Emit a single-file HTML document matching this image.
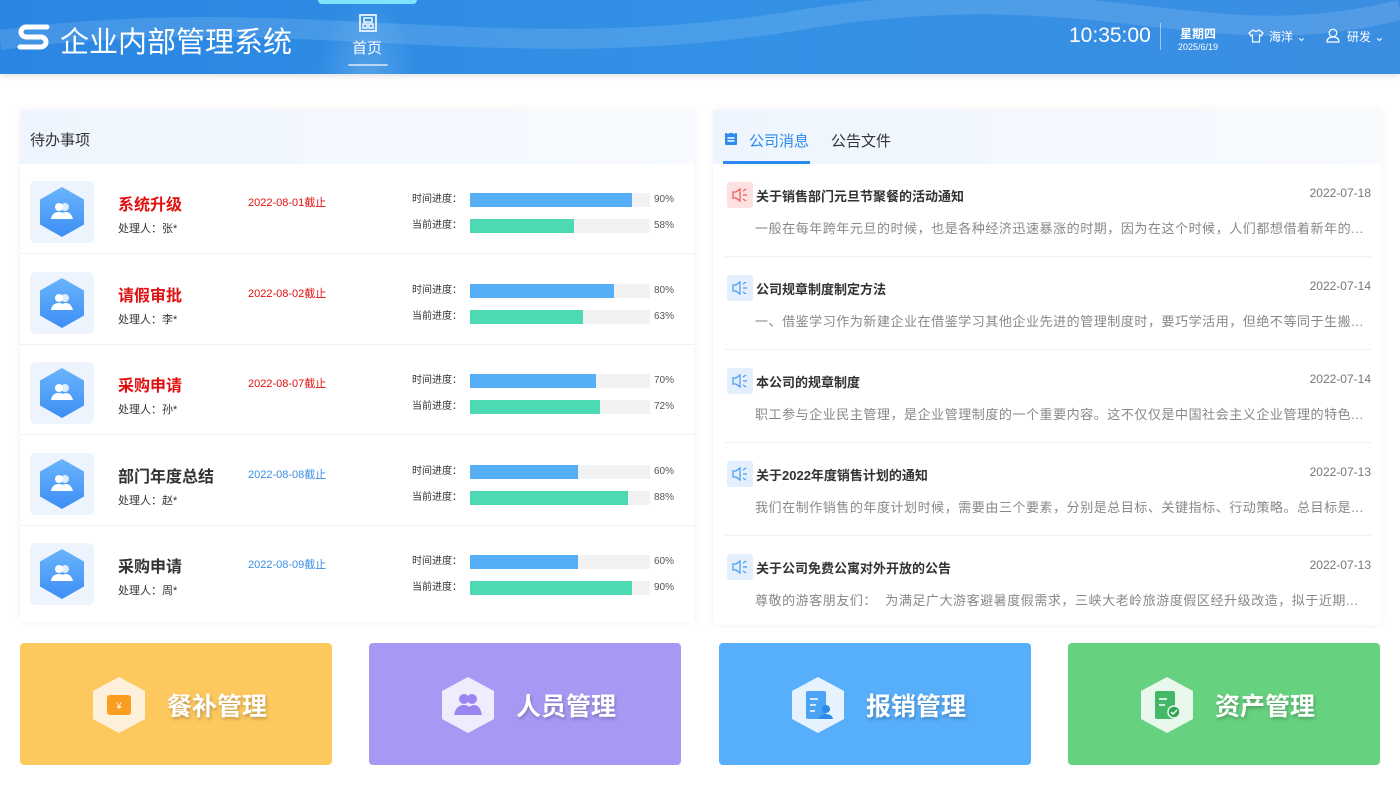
<!DOCTYPE html>
<html><head><meta charset="utf-8"><style>
*{margin:0;padding:0;box-sizing:border-box}
body{width:1400px;height:800px;background:#fff;font-family:"Liberation Sans","Noto Sans CJK SC",sans-serif;position:relative;overflow:hidden;color:#333}
.hdr{position:absolute;left:0;top:0;width:1400px;height:74px;background:linear-gradient(90deg,#2a86e2,#3291e6 50%,#3b8ee2);box-shadow:0 2px 6px rgba(0,0,0,.12)}
.abs{position:absolute}
.panel{position:absolute;background:#fff;box-shadow:0 0 8px rgba(0,0,0,.06)}
.ph{height:54px;background:linear-gradient(90deg,#eef5fe,#f7fbff)}
.row{position:absolute;left:0;width:674px;height:90px;border-bottom:1px solid #eef0f3}
.ibox{position:absolute;left:10px;top:17px;width:64px;height:62px;background:#eef4fe;border-radius:6px}
.t{position:absolute;left:98px;top:27px;font-size:16px;font-weight:bold}
.who{position:absolute;left:98px;top:56px;font-size:11px;color:#333}
.dl{position:absolute;left:228px;top:30px;font-size:11px}
.lb{position:absolute;left:392px;font-size:10px;color:#333;line-height:14px}
.bar{position:absolute;left:450px;width:180px;height:14px;background:#f2f2f2}
.bar i{display:block;height:14px}
.pc{position:absolute;left:634px;font-size:10px;color:#555;line-height:14px}
.msg{position:absolute;left:12px;width:646px;height:93px;border-bottom:1px solid #eef0f3}
.spk{position:absolute;left:2px;top:18px;width:26px;height:26px;border-radius:3px;background:#e3effd}
.spk svg{position:absolute;left:4px;top:5px}
.mt{position:absolute;left:31px;top:22px;font-size:13px;font-weight:bold;color:#333}
.md{position:absolute;right:0;top:22px;font-size:12px;color:#777}
.mx{position:absolute;left:30px;top:54px;font-size:13px;color:#888;white-space:nowrap;width:620px;overflow:hidden;letter-spacing:.55px}
.card{position:absolute;top:643px;width:312px;height:122px;border-radius:4px}
.card .ct{position:absolute;left:147px;top:44px;font-size:25px;font-weight:bold;color:#fff;text-shadow:1px 2px 3px rgba(0,0,0,.25)}
.card svg{position:absolute;left:71px;top:32px}
</style></head><body>
<div class="hdr">
 <svg class="abs" style="left:0;top:0" width="1400" height="74"><path d="M0 40 C300 0 500 70 800 20 S1200 60 1400 10" stroke="rgba(255,255,255,.12)" stroke-width="20" fill="none"/></svg>
 <svg class="abs" style="left:17px;top:23px" width="34" height="28" viewBox="0 0 34 28"><path d="M30 4H9a5 5 0 0 0 0 10h15a5 5 0 0 1 0 10H3" stroke="#fff" stroke-width="5" fill="none" stroke-linecap="round"/></svg>
 <div class="abs" style="left:60px;top:19px;font-size:29px;color:#fff">企业内部管理系统</div>
 <div class="abs" style="left:318px;top:0;width:99px;height:4px;background:#7fe3ff;border-radius:0 0 4px 4px"></div>
 <div class="abs" style="left:318px;top:0;width:99px;height:74px;background:radial-gradient(ellipse at 50% 100%,rgba(255,255,255,.18),transparent 70%)"></div>
 <svg class="abs" style="left:359px;top:14px" width="18" height="18" viewBox="0 0 18 18"><rect x="1" y="1" width="16" height="16" fill="none" stroke="#fff" stroke-width="1.6"/><rect x="5" y="4" width="8" height="4" fill="none" stroke="#fff" stroke-width="1.4"/><rect x="4" y="10" width="4" height="4" fill="none" stroke="#fff" stroke-width="1.4"/><rect x="10" y="10" width="4" height="4" fill="none" stroke="#fff" stroke-width="1.4"/></svg>
 <div class="abs" style="left:352px;top:37px;font-size:15px;color:#fff">首页</div>
 <div class="abs" style="left:348px;top:64px;width:40px;height:2px;background:rgba(255,255,255,.6);border-radius:2px"></div>
 <div class="abs" style="left:1069px;top:24px;font-size:21px;color:#fff">10:35:00</div>
 <div class="abs" style="left:1160px;top:23px;width:1px;height:27px;background:rgba(255,255,255,.5)"></div>
 <div class="abs" style="left:1176px;top:25px;font-size:12px;color:#fff;font-weight:bold;width:44px;text-align:center">星期四<div style="font-size:9px;font-weight:normal">2025/6/19</div></div>
 <svg class="abs" style="left:1248px;top:29px" width="16" height="14" viewBox="0 0 16 14"><path d="M5 1 1 4l2 3 1.5-1V13h7V6L13 7l2-3-4-3q-3 2.5-6 0z" fill="none" stroke="#fff" stroke-width="1.2"/></svg>
 <div class="abs" style="left:1269px;top:28px;font-size:12px;color:#fff">海洋 ⌄</div>
 <svg class="abs" style="left:1326px;top:28px" width="14" height="15" viewBox="0 0 14 15"><circle cx="7" cy="5" r="3.8" fill="none" stroke="#fff" stroke-width="1.2"/><path d="M1 14q0-5 6-5t6 5z" fill="none" stroke="#fff" stroke-width="1.2"/></svg>
 <div class="abs" style="left:1347px;top:28px;font-size:12px;color:#fff">研发 ⌄</div>
</div>

<div class="panel" style="left:20px;top:110px;width:674px;height:512px">
 <div class="ph"><div style="padding:19px 0 0 10px;font-size:15px;color:#333">待办事项</div></div>
 <div id="rows"></div>
</div>

<div class="panel" style="left:713px;top:110px;width:668px;height:515px">
 <div class="ph" style="position:relative">
  <svg class="abs" style="left:11px;top:21px" width="14" height="15" viewBox="0 0 14 15"><rect x="1" y="2" width="12" height="12" rx="1" fill="#2a8af0"/><path d="M4 0v3M10 0v3M3.5 7h7M3.5 10h7" stroke="#fff" stroke-width="1.4"/></svg>
  <div class="abs" style="left:36px;top:20px;font-size:15px;color:#2a8af0">公司消息</div>
  <div class="abs" style="left:10px;top:51px;width:87px;height:3px;background:#2a8af0"></div>
  <div class="abs" style="left:118px;top:20px;font-size:15px;color:#333">公告文件</div>
 </div>
 <div id="msgs"></div>
</div>

<div class="card" style="left:20px;background:#fdc85e"><svg width="56" height="60" viewBox="0 0 56 60"><path d="M28 2 54 16V44L28 58 2 44V16Z" fill="#fdf1dc"/><rect x="16" y="20" width="24" height="20" rx="3" fill="#fb9e1f"/><text x="28" y="34" font-size="9" fill="#fff" text-anchor="middle">¥</text></svg><div class="ct">餐补管理</div></div>
<div class="card" style="left:369px;background:#a699f4"><svg width="56" height="60" viewBox="0 0 56 60"><path d="M28 2 54 16V44L28 58 2 44V16Z" fill="#efecfd"/><circle cx="24" cy="24" r="5" fill="#9b85ef"/><circle cx="32" cy="24" r="5" fill="#9b85ef"/><path d="M14 40q2-10 10-10t8 10zM26 40q2-10 8-10t8 10z" fill="#9b85ef"/></svg><div class="ct">人员管理</div></div>
<div class="card" style="left:719px;background:#57aefb"><svg width="56" height="60" viewBox="0 0 56 60"><path d="M28 2 54 16V44L28 58 2 44V16Z" fill="#e6f3ff"/><rect x="16" y="16" width="20" height="28" rx="2" fill="#4aa3f5"/><path d="M20 24h8M20 30h6M20 36h5" stroke="#fff" stroke-width="1.5"/><circle cx="36" cy="34" r="4" fill="#2e8ae8"/><path d="M29 44q1-5 7-5t7 5z" fill="#2e8ae8"/></svg><div class="ct">报销管理</div></div>
<div class="card" style="left:1068px;background:#66d17f"><svg width="56" height="60" viewBox="0 0 56 60"><path d="M28 2 54 16V44L28 58 2 44V16Z" fill="#e8f8ec"/><rect x="16" y="16" width="20" height="28" rx="2" fill="#44b866"/><path d="M20 24h8M20 30h6" stroke="#fff" stroke-width="1.5"/><circle cx="35" cy="37" r="6" fill="#2fa552" stroke="#e8f8ec" stroke-width="1.5"/><path d="M32 37l2 2 4-4" stroke="#fff" stroke-width="1.4" fill="none"/></svg><div class="ct">资产管理</div></div>

<script>
var d=[["系统升级","#e01010","2022-08-01截止","#e01010","张*",90,58],["请假审批","#e01010","2022-08-02截止","#e01010","李*",80,63],["采购申请","#e01010","2022-08-07截止","#e01010","孙*",70,72],["部门年度总结","#333","2022-08-08截止","#3a8ee6","赵*",60,88],["采购申请","#333","2022-08-09截止","#3a8ee6","周*",60,90]];
var h="";
d.forEach(function(r,i){var top=54+i*90.5;
h+='<div class="row" style="top:'+top+'px'+(i==4?';border:none':'')+'"><div class="ibox"><svg style="position:absolute;left:8px;top:5px" width="48" height="52" viewBox="0 0 48 52"><defs><linearGradient id="g'+i+'" x1="0" y1="0" x2="0" y2="1"><stop offset="0" stop-color="#6ab4fb"/><stop offset="1" stop-color="#3d8ef5"/></linearGradient></defs><path d="M24 1 46 13.5V38.5L24 51 2 38.5V13.5Z" fill="url(#g'+i+')"/><circle cx="21" cy="21" r="4" fill="#fff"/><circle cx="27" cy="21" r="4" fill="#fff" opacity=".8"/><path d="M13 33q1-7 8-7t8 7zM22 33q1-7 6-7t7 7z" fill="#fff"/></svg></div>'+
'<div class="t" style="color:'+r[1]+'">'+r[0]+'</div><div class="who">处理人：'+r[4]+'</div><div class="dl" style="color:'+r[3]+'">'+r[2]+'</div>'+
'<div class="lb" style="top:29px">时间进度：</div><div class="bar" style="top:29px"><i style="width:'+r[5]+'%;background:#55aef6"></i></div><div class="pc" style="top:29px">'+r[5]+'%</div>'+
'<div class="lb" style="top:55px">当前进度：</div><div class="bar" style="top:55px"><i style="width:'+r[6]+'%;background:#4cd9b4"></i></div><div class="pc" style="top:55px">'+r[6]+'%</div></div>';});
document.getElementById("rows").innerHTML=h;
var m=[["关于销售部门元旦节聚餐的活动通知","2022-07-18","一般在每年跨年元旦的时候，也是各种经济迅速暴涨的时期，因为在这个时候，人们都想借着新年的..."],["公司规章制度制定方法","2022-07-14","一、借鉴学习作为新建企业在借鉴学习其他企业先进的管理制度时，要巧学活用，但绝不等同于生搬..."],["本公司的规章制度","2022-07-14","职工参与企业民主管理，是企业管理制度的一个重要内容。这不仅仅是中国社会主义企业管理的特色..."],["关于2022年度销售计划的通知","2022-07-13","我们在制作销售的年度计划时候，需要由三个要素，分别是总目标、关键指标、行动策略。总目标是..."],["关于公司免费公寓对外开放的公告","2022-07-13","尊敬的游客朋友们：&nbsp;&nbsp;为满足广大游客避暑度假需求，三峡大老岭旅游度假区经升级改造，拟于近期..."]];
var g="";
m.forEach(function(r,i){var red=i==0,c=red?"#e55":"#4a9af0";
g+='<div class="msg" style="top:'+(54+i*93)+'px'+(i==4?';border:none':'')+'"><div class="spk" style="background:'+(red?'#fde0e0':'#e3effd')+'"><svg width="18" height="16" viewBox="0 0 18 16"><path d="M2 5h3l4-3v12l-4-3H2z" fill="none" stroke="'+c+'" stroke-width="1.2"/><path d="M12 4l3-2M12 8h4M12 12l3 2" stroke="'+c+'" stroke-width="1.2"/></svg></div><div class="mt">'+r[0]+'</div><div class="md">'+r[1]+'</div><div class="mx">'+r[2]+'</div></div>';});
document.getElementById("msgs").innerHTML=g;
</script>
</body></html>
